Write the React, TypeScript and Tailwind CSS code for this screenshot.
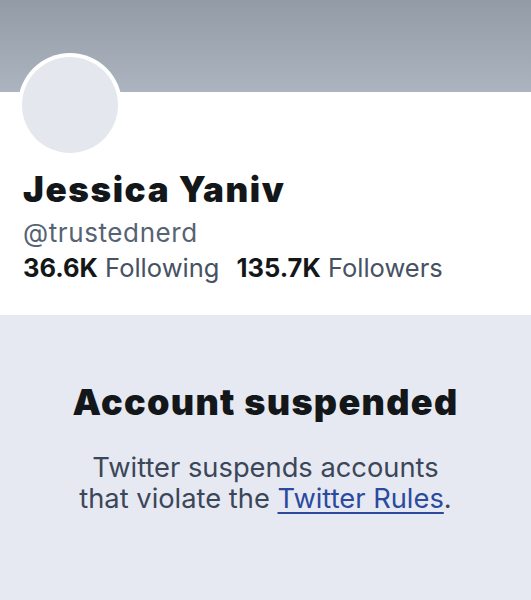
import React from "react";

export default function App() {
  return (
    <div className="w-[531px] h-[600px] overflow-hidden bg-[#e6e9f2] flex flex-col" style={{ fontFamily: "Inter, 'Noto Sans', sans-serif" }}>
      <div className="h-[92px] shrink-0 bg-gradient-to-b from-[#939ba6] to-[#abb4bf]" />
      <div className="bg-white h-[223px] shrink-0 pl-[23px] flex flex-col">
        <div className="-mt-[39px] ml-[-5px] w-[104px] h-[104px] rounded-full bg-white p-[4px]">
          <div className="w-full h-full rounded-full bg-[#e4e7ee]" />
        </div>
        <div className="mt-[12px] text-[35px] leading-[40px] font-black text-[#14171a] tracking-[1.6px]">Jessica Yaniv</div>
        <div className="mt-[8px] text-[26px] leading-[32px] text-[#566373] tracking-[0.6px]">@trustednerd</div>
        <div className="mt-[3px] text-[25.5px] leading-[32px] text-[#465263]">
          <span className="font-bold text-[#14171a]">36.6K</span> Following{" "}
          <span className="ml-[10px] font-bold text-[#14171a]">135.7K</span> Followers
        </div>
      </div>
      <div className="flex flex-col items-center pt-[65px]">
        <div className="text-[36px] leading-[44px] font-black text-[#14171a] tracking-[1.3px]">Account suspended</div>
        <div className="mt-[28px] text-[27.3px] leading-[31px] text-[#3b4758] text-center">
          Twitter suspends accounts
          <br />
          that violate the{" "}
          <a className="text-[#2b4a9d] underline decoration-[2px] underline-offset-[4px]">Twitter Rules</a>.
        </div>
      </div>
    </div>
  );
}
